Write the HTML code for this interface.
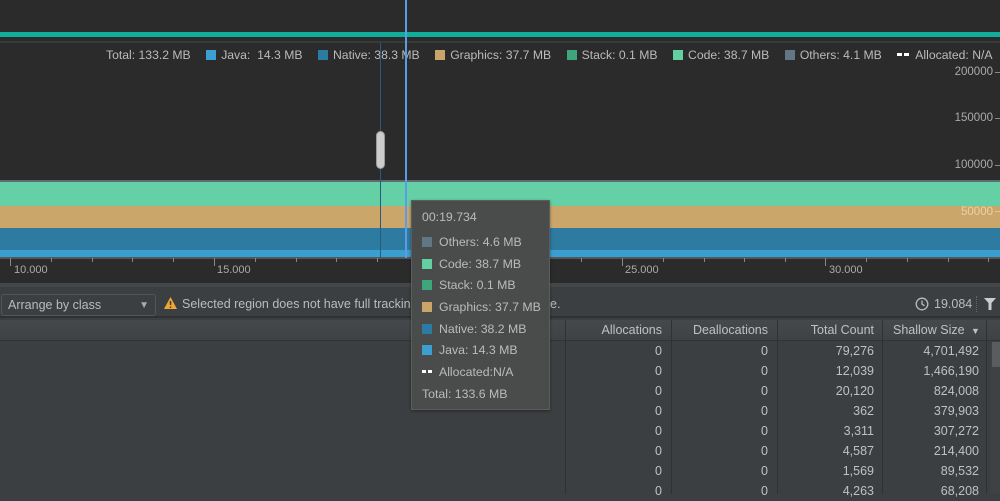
<!DOCTYPE html>
<html><head><style>
*{margin:0;padding:0;box-sizing:border-box}
body{width:1000px;height:494px;overflow:hidden;background:#3c3f41;font-family:"Liberation Sans",sans-serif;font-size:12px;color:#bbb;position:relative}
.a{position:absolute}
.sw{display:inline-block;width:10px;height:10px;vertical-align:-1px;margin-right:5px}
.leg span.i{margin-right:15.5px}
.tt div{height:21.7px;line-height:21.7px;white-space:nowrap}
.r{position:absolute;text-align:right;color:#c0c0c0}
.yl{position:absolute;right:7px;font-size:11.5px;color:#aaa}
</style></head><body>
<div class="a" style="left:0;top:0;width:1000px;height:286px;background:#2b2b2b"></div>
<div class="a" style="left:0;top:32px;width:1000px;height:5px;background:#12ae9c"></div>
<div class="a" style="left:0;top:41px;width:1000px;height:2px;background:#3a3a3a"></div>
<div class="a leg" style="left:106px;top:48px;white-space:nowrap;font-size:12.2px;color:#bbb">
<span class="i">Total: 133.2 MB</span><span class="sw" style="background:#3b9fd1"></span><span class="i">Java:&nbsp; 14.3 MB</span><span class="sw" style="background:#2c7ba3"></span><span class="i">Native: 38.3 MB</span><span class="sw" style="background:#caa56a"></span><span class="i">Graphics: 37.7 MB</span><span class="sw" style="background:#3fa57c"></span><span class="i">Stack: 0.1 MB</span><span class="sw" style="background:#63d0a4"></span><span class="i">Code: 38.7 MB</span><span class="sw" style="background:#627786"></span><span class="i">Others: 4.1 MB</span><span style="display:inline-block;width:12px;height:3px;border-left:5px solid #fff;border-right:5px solid #fff;vertical-align:3px;margin-right:6px"></span><span>Allocated: N/A</span></div>
<div class="yl" style="top:66px">200000</div>
<div class="yl" style="top:112px">150000</div>
<div class="yl" style="top:159px">100000</div>
<div class="a" style="right:0;top:72px;width:5px;height:1px;background:#888"></div>
<div class="a" style="right:0;top:118px;width:5px;height:1px;background:#888"></div>
<div class="a" style="right:0;top:165px;width:5px;height:1px;background:#888"></div>
<div class="a" style="left:0;top:180px;width:1000px;height:2px;background:#5f6a70"></div>
<div class="a" style="left:0;top:182px;width:1000px;height:24px;background:#65d0a6"></div>
<div class="a" style="left:0;top:206px;width:1000px;height:22px;background:#caa66b"></div>
<div class="a" style="left:0;top:228px;width:1000px;height:22px;background:#2e7ba2"></div>
<div class="a" style="left:0;top:250px;width:1000px;height:7px;background:#3a9fd0"></div>
<div class="yl" style="top:206px;color:#e8d4a8">50000</div>
<div class="a" style="right:0;top:211px;width:5px;height:1px;background:#e0c898"></div>
<div class="a" style="left:0;top:257px;width:1000px;height:2px;background:#555"></div>
<svg class="a" style="left:0;top:258px" width="1000" height="8">
<g stroke="#888" stroke-width="1">
<path d="M10.5 0v8M51.5 0v4M92.5 0v4M132.5 0v4M173.5 0v4M214.5 0v8M255.5 0v4M296.5 0v4M336.5 0v4M377.5 0v4M418.5 0v8M459.5 0v4M500.5 0v4M540.5 0v4M581.5 0v4M622.5 0v8M663.5 0v4M704.5 0v4M744.5 0v4M785.5 0v4M825.5 0v8M866.5 0v4M907.5 0v4M948.5 0v4M988.5 0v4"/></g></svg>
<div class="a" style="left:14px;top:264px;font-size:11px;color:#aaa">10.000</div>
<div class="a" style="left:217px;top:264px;font-size:11px;color:#aaa">15.000</div>
<div class="a" style="left:625px;top:264px;font-size:11px;color:#aaa">25.000</div>
<div class="a" style="left:829px;top:264px;font-size:11px;color:#aaa">30.000</div>
<div class="a" style="left:380px;top:43px;width:1px;height:215px;background:#2a5a80"></div>
<div class="a" style="left:376px;top:131px;width:9px;height:38px;border-radius:5px;background:#ccc;border:1px solid #999"></div>
<div class="a" style="left:405px;top:0;width:2px;height:258px;background:#5b9ce8"></div>
<div class="a" style="left:0;top:283px;width:1000px;height:4px;background:#444749"></div>
<div class="a" style="left:0;top:287px;width:1000px;height:31px;background:#3c3f41;border-bottom:2px solid #2f3133"></div>
<div class="a" style="left:1px;top:294px;width:155px;height:22px;border:1px solid #555;border-radius:3px;background:#3c3f41;line-height:20px;padding-left:6px;font-size:12.5px">Arrange by class<span style="position:absolute;right:6px;top:1px;font-size:10px;color:#aaa">▼</span></div>
<svg class="a" style="left:164px;top:297px" width="13" height="12"><path d="M6.5 0L13 12H0Z" fill="#f0a732"/><path d="M6.5 4v4M6.5 9.5v1.5" stroke="#3c3f41" stroke-width="1.6"/></svg>
<div class="a" style="left:182px;top:297px;font-size:12.5px;white-space:nowrap">Selected region does not have full tracking data.</div>
<div class="a" style="left:550px;top:297px;font-size:12.5px">e.</div>
<svg class="a" style="left:915px;top:297px" width="14" height="14"><circle cx="7" cy="7" r="5.8" fill="none" stroke="#bbb" stroke-width="1.3"/><path d="M7 3.5V7l2.5 1.8" fill="none" stroke="#bbb" stroke-width="1.3"/></svg>
<div class="a" style="left:934px;top:297px;font-size:12.5px">19.084</div>
<div class="a" style="left:976px;top:296px;width:1px;height:16px;border-left:1px dotted #666"></div>
<svg class="a" style="left:984px;top:298px" width="12" height="12"><path d="M0 0H12L7.5 5V12H4.5V5Z" fill="#ccc"/></svg>
<div class="a" style="left:0;top:320px;width:1000px;height:21px;background:linear-gradient(#46494b,#3f4244);border-bottom:1px solid #333"></div>
<div class="a" style="left:565px;top:320px;width:1px;height:174px;background:#2f3133"></div>
<div class="a" style="left:671px;top:320px;width:1px;height:174px;background:#2f3133"></div>
<div class="a" style="left:777px;top:320px;width:1px;height:174px;background:#2f3133"></div>
<div class="a" style="left:882px;top:320px;width:1px;height:174px;background:#2f3133"></div>
<div class="a" style="left:986px;top:320px;width:1px;height:174px;background:#2f3133"></div>
<div class="r" style="left:565px;width:97px;top:323px;font-size:12.5px">Allocations</div>
<div class="r" style="left:671px;width:97px;top:323px;font-size:12.5px">Deallocations</div>
<div class="r" style="left:777px;width:97px;top:323px;font-size:12.5px">Total Count</div>
<div class="a" style="left:893px;top:323px;font-size:12.5px;color:#c0c0c0">Shallow Size <span style="font-size:9px;margin-left:3px">▼</span></div>
<div class="a" style="left:991px;top:341px;width:9px;height:153px;background:#3f4244"></div>
<div class="a" style="left:992px;top:342px;width:8px;height:25px;background:#5a5d5f"></div>
<div class="a" style="left:565px;top:341px;width:421px;font-size:12.5px">
<div style="position:relative;height:160px">
<div class="r" style="left:0;width:97px;top:0;line-height:20px">0<br>0<br>0<br>0<br>0<br>0<br>0<br>0</div>
<div class="r" style="left:106px;width:97px;top:0;line-height:20px">0<br>0<br>0<br>0<br>0<br>0<br>0<br>0</div>
<div class="r" style="left:212px;width:97px;top:0;line-height:20px">79,276<br>12,039<br>20,120<br>362<br>3,311<br>4,587<br>1,569<br>4,263</div>
<div class="r" style="left:317px;width:97px;top:0;line-height:20px">4,701,492<br>1,466,190<br>824,008<br>379,903<br>307,272<br>214,400<br>89,532<br>68,208</div>
</div></div>
<div class="a tt" style="left:411px;top:200px;width:139px;height:210px;background:#4a4c4c;border:1px solid #5c5e5e;box-shadow:0 1px 3px rgba(0,0,0,.4);padding:6px 10px;font-size:12.3px;color:#bbb">
<div style="height:25px">00:19.734</div>
<div><span class="sw" style="background:#627786;margin-right:7px"></span>Others: 4.6 MB</div>
<div><span class="sw" style="background:#63d0a4;margin-right:7px"></span>Code: 38.7 MB</div>
<div><span class="sw" style="background:#3fa57c;margin-right:7px"></span>Stack: 0.1 MB</div>
<div><span class="sw" style="background:#caa56a;margin-right:7px"></span>Graphics: 37.7 MB</div>
<div><span class="sw" style="background:#2c7ba3;margin-right:7px"></span>Native: 38.2 MB</div>
<div><span class="sw" style="background:#3b9fd1;margin-right:7px"></span>Java: 14.3 MB</div>
<div><span style="display:inline-block;width:10px;height:3px;border-left:4px solid #fff;border-right:4px solid #fff;vertical-align:3px;margin-right:7px"></span>Allocated:N/A</div>
<div>Total: 133.6 MB</div>
</div>
</body></html>
